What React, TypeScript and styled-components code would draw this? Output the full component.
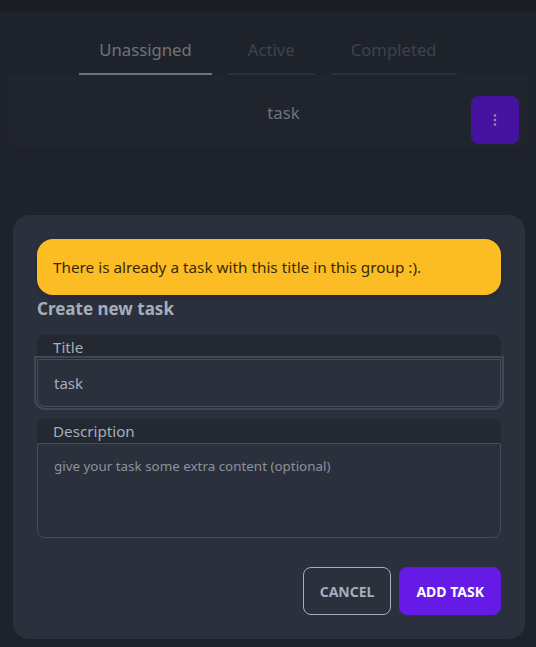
import React, { useState } from 'react';
import styled, { createGlobalStyle } from 'styled-components';

const GlobalStyle = createGlobalStyle`
  html, body {
    margin: 0;
    padding: 0;
    background: #2a303c;
    font-family: "Noto Sans", Lato, sans-serif;
  }
  * { box-sizing: border-box; }
`;

const Page = styled.div`
  position: relative;
  width: 536px;
  height: 647px;
  overflow: hidden;
  background: #2a303c;
`;

const TopBar = styled.div`
  height: 12px;
  background: #242831;
`;

const Tabs = styled.div`
  display: flex;
  justify-content: center;
  gap: 16px;
  padding-top: 26px;
`;

const Tab = styled.div<{ active?: boolean }>`
  padding: 0 20px 11px;
  font-size: 16.7px;
  line-height: 24px;
  color: ${(p) => (p.active ? '#979eab' : '#555b67')};
  border-bottom: 2px solid ${(p) => (p.active ? '#979eab' : '#3b414d')};
`;

const TaskCard = styled.div`
  display: flex;
  align-items: flex-end;
  margin: 0 7px;
  padding: 0 10px 3px 0;
  height: 72px;
  background: #2d323e;
  border-radius: 0 0 16px 16px;
`;

const TaskName = styled.div`
  flex: 1;
  align-self: flex-start;
  margin-top: 27px;
  text-align: center;
  padding-left: 89px;
  font-size: 16.7px;
  line-height: 22px;
  color: #979eab;
`;

const KebabButton = styled.button`
  width: 48px;
  height: 48px;
  border: none;
  border-radius: 8px;
  background: #6119dc;
  display: flex;
  align-items: center;
  justify-content: center;
  padding: 0;
`;

const Backdrop = styled.div`
  position: absolute;
  inset: 0;
  background: rgba(0, 0, 0, 0.27);
`;

const Modal = styled.div`
  position: absolute;
  left: 13px;
  top: 215px;
  width: 512px;
  background: #2a303c;
  border-radius: 16px;
  padding: 24px;
  display: flex;
  flex-direction: column;
`;

const Alert = styled.div`
  height: 56px;
  border-radius: 16px;
  background: #fbbd23;
  color: #382a04;
  font-size: 15.3px;
  padding: 0 16px;
  display: flex;
  align-items: center;
  box-shadow: 0 2px 6px rgba(0, 0, 0, 0.12);
`;

const Heading = styled.h3`
  margin: 2px 0 14px;
  font-size: 17px;
  line-height: 24px;
  font-weight: 700;
  color: #a6adbb;
`;

const Field = styled.div<{ gap?: number }>`
  display: flex;
  flex-direction: column;
  margin-bottom: ${(p) => p.gap ?? 0}px;
`;

const LabelBox = styled.label`
  height: 24px;
  background: #232831;
  border-radius: 8px 8px 0 0;
  padding: 0 16px;
  font-size: 15.2px;
  line-height: 24px;
  color: #a6adbb;
`;

const TextInput = styled.input`
  height: 48px;
  padding: 0 16px;
  background: #2a303c;
  border: 1px solid #464c58;
  border-radius: 0 0 8px 8px;
  outline: 2px solid #414755;
  outline-offset: 1px;
  font-family: inherit;
  font-size: 15px;
  color: #a6adbb;
`;

const TextArea = styled.textarea`
  height: 95px;
  padding: 12px 16px;
  background: #2a303c;
  border: 1px solid #464c58;
  border-radius: 0 0 8px 8px;
  font-family: inherit;
  font-size: 13.4px;
  line-height: 20px;
  color: #a6adbb;
  resize: none;
  outline: none;

  &::placeholder {
    color: #8c929e;
  }
`;

const Actions = styled.div`
  display: flex;
  justify-content: flex-end;
  gap: 8px;
  margin-top: 29px;
`;

const Button = styled.button<{ primary?: boolean }>`
  height: 48px;
  padding: 0 16px;
  border-radius: 8px;
  font-family: inherit;
  font-size: 14px;
  font-weight: 700;
  text-transform: uppercase;
  border: 1px solid ${(p) => (p.primary ? '#661ae6' : '#a6adbb')};
  background: ${(p) => (p.primary ? '#661ae6' : 'transparent')};
  color: ${(p) => (p.primary ? '#ffffff' : '#a6adbb')};
`;

const tabs = ['Unassigned', 'Active', 'Completed'];

export default function App() {
  const [title, setTitle] = useState('task');
  const [desc, setDesc] = useState('');

  return (
    <Page>
      <GlobalStyle />
      <TopBar />
      <Tabs>
        {tabs.map((t, i) => (
          <Tab key={t} active={i === 0}>
            {t}
          </Tab>
        ))}
      </Tabs>
      <TaskCard>
        <TaskName>task</TaskName>
        <KebabButton>
          <svg width="4" height="12" viewBox="0 0 4 12">
            <circle cx="2" cy="1.5" r="1.3" fill="#c9c3d8" />
            <circle cx="2" cy="6" r="1.3" fill="#c9c3d8" />
            <circle cx="2" cy="10.5" r="1.3" fill="#c9c3d8" />
          </svg>
        </KebabButton>
      </TaskCard>

      <Backdrop />
      <Modal>
        <Alert>There is already a task with this title in this group :).</Alert>
        <Heading>Create new task</Heading>
        <Field gap={12}>
          <LabelBox>Title</LabelBox>
          <TextInput value={title} onChange={(e) => setTitle(e.target.value)} />
        </Field>
        <Field>
          <LabelBox>Description</LabelBox>
          <TextArea
            value={desc}
            onChange={(e) => setDesc(e.target.value)}
            placeholder="give your task some extra content (optional)"
          />
        </Field>
        <Actions>
          <Button>Cancel</Button>
          <Button primary>Add task</Button>
        </Actions>
      </Modal>
    </Page>
  );
}
